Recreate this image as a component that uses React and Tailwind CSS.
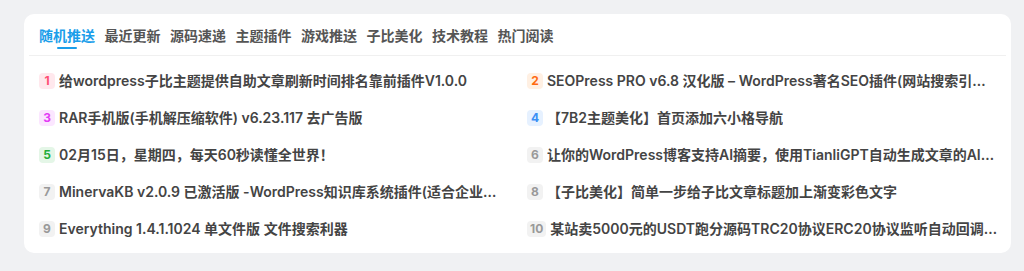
const tabs = ["随机推送", "最近更新", "源码速递", "主题插件", "游戏推送", "子比美化", "技术教程", "热门阅读"];

const posts = [
  "给wordpress子比主题提供自助文章刷新时间排名靠前插件V1.0.0",
  "SEOPress PRO v6.8 汉化版 – WordPress著名SEO插件(网站搜索引擎优化)",
  "RAR手机版(手机解压缩软件) v6.23.117 去广告版",
  "【7B2主题美化】首页添加六小格导航",
  "02月15日，星期四，每天60秒读懂全世界！",
  "让你的WordPress博客支持AI摘要，使用TianliGPT自动生成文章的AI摘要",
  "MinervaKB v2.0.9 已激活版 -WordPress知识库系统插件(适合企业网站)",
  "【子比美化】简单一步给子比文章标题加上渐变彩色文字",
  "Everything 1.4.1.1024 单文件版 文件搜索利器",
  "某站卖5000元的USDT跑分源码TRC20协议ERC20协议监听自动回调usdt",
];

const badgeStyles = [
  "bg-[#ffe8ed] text-[#ff4f73]",
  "bg-[#fff0e3] text-[#ff6a10]",
  "bg-[#fbe6ff] text-[#e33cf5]",
  "bg-[#e6f1ff] text-[#3a8ff5]",
  "bg-[#e4f6e7] text-[#22ad3a]",
];

export default function App() {
  return (
    <div className="min-h-[271px] bg-[#f0f1f3] pt-[14px] pl-[24px]" style={{ fontFamily: 'Inter, "Noto Sans CJK SC", sans-serif' }}>
      <div className="w-[987px] rounded-[10px] bg-white pb-[6px]">
        <div className="mx-[5px] flex gap-[9.5px] border-b border-[#f0f0f0] px-[10px] pt-[12px] pb-[6px]">
          {tabs.map((t, i) => (
            <div key={t} className="flex flex-col items-center">
              <span className={`text-[14px] leading-5 font-bold ${i === 0 ? "text-[#1b9eea]" : "text-[#555]"}`}>{t}</span>
              <span className={`mt-[1px] h-[2px] w-5 rounded-full ${i === 0 ? "bg-[#1b9eea]" : "bg-transparent"}`} />
            </div>
          ))}
        </div>

        <div className="grid grid-cols-2 gap-x-[17px] pl-[15px] pr-[13px] pt-[6px]">
          {posts.map((p, i) => (
            <div key={i} className="flex h-[37px] items-center gap-1 min-w-0">
              <span
                className={`flex h-4 min-w-4 shrink-0 items-center justify-center rounded-[4px] px-[3px] text-[12px] font-bold leading-none ${
                  badgeStyles[i] || "bg-[#f2f2f2] text-[#999]"
                }`}
              >
                {i + 1}
              </span>
              <span className="truncate text-[14px] font-semibold text-[#444]">{p}</span>
            </div>
          ))}
        </div>
      </div>
    </div>
  );
}
